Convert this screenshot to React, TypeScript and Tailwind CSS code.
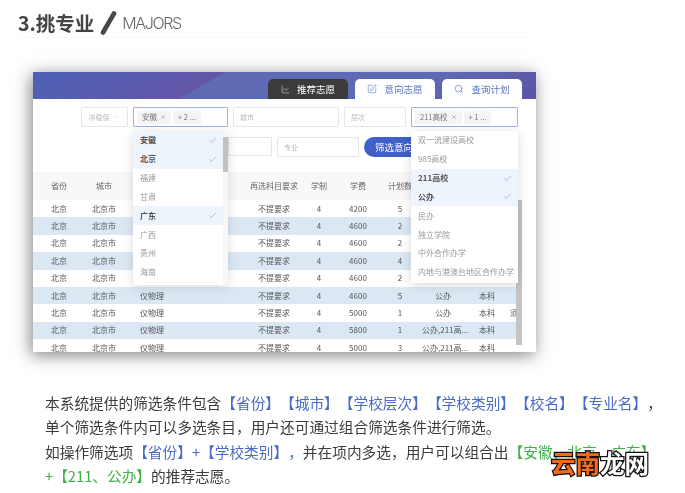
import { Check, ChevronDown, LineChart, Search, SquarePen, X } from 'lucide-react'

const cjk = "font-['Noto_Sans_CJK_SC','Noto_Sans',sans-serif]"

const rows = [
  { fee: '4200', plan: '5', type: '公办', last: '' },
  { fee: '4600', plan: '2', type: '公办', last: '' },
  { fee: '4600', plan: '2', type: '公办', last: '' },
  { fee: '4600', plan: '4', type: '公办', last: '' },
  { fee: '4600', plan: '2', type: '公办', last: '' },
  { fee: '4600', plan: '5', type: '公办', last: '' },
  { fee: '5000', plan: '1', type: '公办', last: '须' },
  { fee: '5800', plan: '1', type: '公办,211高...', last: '' },
  { fee: '5000', plan: '3', type: '公办,211高...', last: '' },
]

const provinces = [
  { name: '安徽', on: true },
  { name: '北京', on: true },
  { name: '福建', on: false },
  { name: '甘肃', on: false },
  { name: '广东', on: true },
  { name: '广西', on: false },
  { name: '贵州', on: false },
  { name: '海南', on: false },
]

const schools = [
  { name: '双一流建设高校', on: false },
  { name: '985高校', on: false },
  { name: '211高校', on: true },
  { name: '公办', on: true },
  { name: '民办', on: false },
  { name: '独立学院', on: false },
  { name: '中外合作办学', on: false },
  { name: '内地与港澳台地区合作办学', on: false },
]

const gridCols = 'grid grid-cols-[52px_38px_125px_52px_38px_40px_44px_42px_46px_6px]'

function Option({ name, on }: { name: string; on: boolean }) {
  return (
    <div className={`h-[18.85px] pl-[7px] pr-[6px] flex items-center justify-between text-[8px] whitespace-nowrap ${on ? 'bg-[#edf4fc] text-[#555] font-bold' : 'text-[#999]'}`}>
      <span>{name}</span>
      {on && <Check size={9} strokeWidth={1.2} className="text-[#5a78c0]" />}
    </div>
  )
}

function Chip({ text, close }: { text: string; close?: boolean }) {
  return (
    <span className="h-[13px] px-[5px] bg-[#f4f4f4] rounded-[1px] flex items-center gap-[3px] text-[7.5px] text-[#777] whitespace-nowrap">
      {text}
      {close && <X size={6} className="text-[#888]" />}
    </span>
  )
}

function Tab({ dark, icon, label }: { dark?: boolean; icon: React.ReactNode; label: string }) {
  return (
    <div className={`w-[80px] h-[20px] rounded-t-[5px] flex items-center justify-center gap-[7px] text-[9.5px] ${dark ? 'bg-[#3b3b3b] text-white' : 'bg-white text-[#5a74c4]'}`}>
      {icon}
      {label}
    </div>
  )
}

function Field({ width, text }: { width: string; text: string }) {
  return (
    <div className={`${width} h-[20px] border border-[#e6e6e6] rounded-[1px] flex items-center px-[6px] text-[7px] text-[#bbb]`}>
      {text}
    </div>
  )
}

export default function App() {
  return (
    <div className={`relative w-[685px] h-[493px] overflow-hidden bg-white ${cjk}`}>
      <div className="blur-[0.45px]">
        <div className="h-[72px] px-[18px] pt-[8px]">
          <div className="flex items-center h-[30px] border-b border-[#f8f8f8] w-[512px]">
            <span className="text-[19.5px] leading-none font-bold text-[#444]">3.挑专业</span>
            <svg width="18" height="24" viewBox="0 0 18 24" className="ml-[5px]">
              <path d="M15 2.5 4 21.5" stroke="#484848" strokeWidth="4.6" strokeLinecap="round" />
            </svg>
            <span className="ml-[5px] text-[16px] leading-none font-['Inter',sans-serif] font-light tracking-[-1.4px] text-[#666]">MAJORS</span>
          </div>
        </div>

        <div className="relative ml-[33px] w-[503px] h-[280px] overflow-hidden bg-white shadow-[-2px_3px_16px_rgba(0,0,0,0.5)]">
          <div className="h-[27px] pt-[7px] pr-[14px] flex justify-end gap-[7px] bg-[linear-gradient(150deg,#4c62b6_0%,#6456a8_35%,#5f6ab4_35%,#5f6ab4_75%,#5d52a4_100%)]">
            <Tab dark icon={<LineChart size={9} strokeWidth={1.3} />} label="推荐志愿" />
            <Tab icon={<SquarePen size={10} strokeWidth={1.4} />} label="意向志愿" />
            <Tab icon={<Search size={10} strokeWidth={1.6} />} label="查询计划" />
          </div>

          <div className="h-[73px]">
            <div className="pt-[8px] pl-[48px] flex gap-[5px]">
              <div className="w-[47px] h-[20px] border border-[#e6e6e6] rounded-[1px] flex items-center justify-center gap-[3px] text-[7px] text-[#bbb]">
                冲稳保
                <ChevronDown size={8} strokeWidth={1} />
              </div>
              <div className="w-[95px] h-[20px] border border-[#9fb2e2] rounded-[1px] flex items-center gap-[2px] px-[3px]">
                <Chip text="安徽" close />
                <Chip text="+ 2 ..." />
              </div>
              <Field width="w-[106px]" text="城市" />
              <Field width="w-[62px]" text="层次" />
              <div className="w-[107px] h-[20px] border border-[#9fb2e2] rounded-[1px] flex items-center gap-[2px] px-[3px]">
                <Chip text="211高校" close />
                <Chip text="+ 1 ..." />
              </div>
            </div>
            <div className="mt-[10px] pl-[195px] flex gap-[5px]">
              <div className="w-[44px] h-[19px] border border-[#e6e6e6]" />
              <Field width="w-[82px]" text="专业" />
              <div className="w-[80px] h-[20px] rounded-full bg-[#3f60c8] text-white text-[9.5px] flex items-center pl-[11px]">筛选意向志愿</div>
            </div>
          </div>

          <div className="flex">
            <div className="w-[483px] text-[8px] text-[#555]">
              <div className={`${gridCols} h-[28px] items-center text-center bg-[#f8f8f8] text-[#666]`}>
                <span>省份</span>
                <span>城市</span>
                <span />
                <span className="whitespace-nowrap">再选科目要求</span>
                <span>学制</span>
                <span>学费</span>
                <span>计划数</span>
                <span />
                <span />
                <span />
              </div>
              {rows.map((r, i) => (
                <div key={i} className={`${gridCols} h-[17.4px] items-center text-center ${i % 2 === 1 ? 'bg-[#dbe8f4]' : 'bg-white'}`}>
                  <span>北京</span>
                  <span className="whitespace-nowrap">北京市</span>
                  <span className="text-left pl-[17px]">仪物理</span>
                  <span>不提要求</span>
                  <span>4</span>
                  <span>{r.fee}</span>
                  <span>{r.plan}</span>
                  <span className="whitespace-nowrap">{r.type}</span>
                  <span>本科</span>
                  <span className="overflow-hidden text-left">{r.last}</span>
                </div>
              ))}
            </div>
            <div className="w-[6px] mt-[28px] h-[145px] bg-[#c4c4c4]" />
          </div>

          <div className="absolute left-[100px] top-[59px] w-[95px] h-[154px] bg-white shadow-[0_2px_10px_rgba(0,0,0,0.15)] flex">
            <div className="flex-1 min-w-0">
              {provinces.map((p) => (
                <Option key={p.name} name={p.name} on={p.on} />
              ))}
            </div>
            <div className="w-[5px] bg-[#f7f7f7] flex flex-col">
              <div className="h-[6px]" />
              <div className="h-[35px] bg-[#c2c2c2]" />
            </div>
          </div>

          <div className="absolute left-[378px] top-[59px] w-[107px] h-[152px] bg-white shadow-[0_2px_10px_rgba(0,0,0,0.15)]">
            {schools.map((s) => (
              <Option key={s.name} name={s.name} on={s.on} />
            ))}
          </div>
        </div>

        <div className="mt-[39px] pl-[45px] text-[14.7px] leading-[24.4px] text-[#3c3c3c] whitespace-nowrap [text-spacing-trim:space-all]">
          <div>
            本系统提供的筛选条件包含
            <span className="text-[#4a6bc4]">【省份】【城市】【学校层次】【学校类别】【校名】【专业名】</span>
            <span>，</span>
          </div>
          <div>单个筛选条件内可以多选条目，用户还可通过组合筛选条件进行筛选。</div>
          <div>
            如操作筛选项
            <span className="text-[#4a6bc4]">【省份】+【学校类别】，</span>
            并在项内多选，用户可以组合出
            <span className="text-[#3fb14a]">【安徽、北京、广东】</span>
          </div>
          <div>
            <span className="text-[#3fb14a]">+【211、公办】</span>
            的推荐志愿。
          </div>
        </div>
      </div>

      <div className="absolute left-[551px] top-[451px] text-[24.5px] leading-none font-bold whitespace-nowrap [-webkit-text-stroke:2.5px_#111] [paint-order:stroke_fill]">
        <span className="text-[#f26a1b]">云南</span>
        <span className="text-white">龙网</span>
      </div>
    </div>
  )
}
